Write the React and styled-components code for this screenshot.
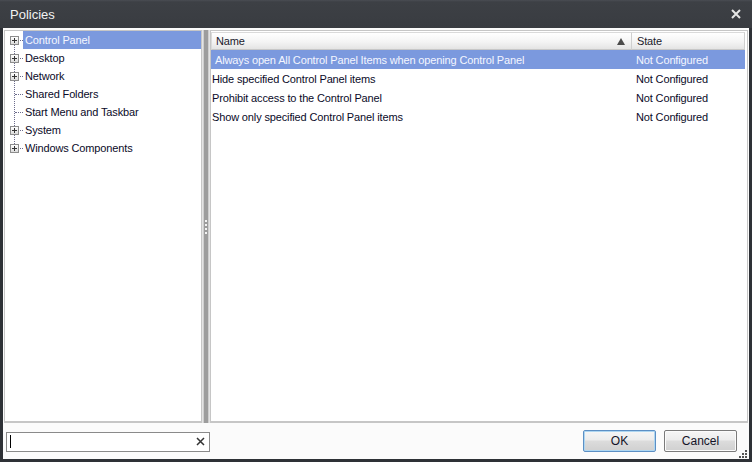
import styled, { createGlobalStyle } from "styled-components";

const Global = createGlobalStyle`
    html, body {
        margin: 0;
        padding: 0;
        background: #2d3035;
    }
    * {
        box-sizing: border-box;
    }
`;

const Window = styled.div`
    width: 752px;
    height: 462px;
    display: flex;
    flex-direction: column;
    background: #2e3136;
    padding: 0 3px 3px 3px;
    font-family: "Liberation Sans", Arial, sans-serif;
    font-size: 11px;
    letter-spacing: -0.14px;
    color: #0a0a28;
`;

const TitleBar = styled.div`
    height: 28px;
    flex: none;
    display: flex;
    align-items: center;
    justify-content: space-between;
    margin: 0 -3px;
    padding: 0 8px 0 10px;
    background: linear-gradient(#4a4d53 0px, #3d4045 2px, #393c41 100%);
    color: #f2f2f2;
    font-size: 13px;
    letter-spacing: 0;
`;

const CloseIcon = styled.svg`
    width: 10px;
    height: 10px;
    margin-right: 3px;
`;

const Body = styled.div`
    flex: 1;
    display: flex;
    flex-direction: column;
    background: #fbfbfb;
    padding: 2px 1px 0 1px;
`;

const Panes = styled.div`
    flex: 1;
    display: flex;
    min-height: 0;
`;

const TreePane = styled.div`
    width: 198px;
    flex: none;
    background: #fff;
    border: 1px solid #c6c6c6;
    border-bottom-width: 2px;
`;

const Splitter = styled.div`
    width: 8px;
    flex: none;
    display: flex;
    align-items: center;
    justify-content: center;
    background: #cfcfcf;
    border-left: 1px solid #e4e4e4;
    border-right: 1px solid #e4e4e4;
`;

const SplitBar = styled.div`
    width: 4px;
    height: 100%;
    background: #9d9d9d;
    display: flex;
    flex-direction: column;
    align-items: center;
    justify-content: center;
    gap: 2px;
`;

const Grip = styled.span`
    width: 2px;
    height: 2px;
    background: #f4f4f4;
`;

const TreeList = styled.ul`
    list-style: none;
    margin: 0;
    padding: 0;
    position: relative;

    &::before {
        content: "";
        position: absolute;
        left: 9px;
        top: 8px;
        height: 109px;
        border-left: 1px dotted #6c6c8c;
    }
`;

const TreeRow = styled.li`
    height: 18px;
    display: flex;
    align-items: center;
`;

const Expander = styled.span`
    width: 18px;
    flex: none;
    display: flex;
    align-items: center;
    padding-left: 5px;
    position: relative;
    height: 100%;

    &::after {
        content: "";
        position: absolute;
        left: 10px;
        right: 0;
        top: 9px;
        border-top: 1px dotted #6c6c8c;
    }
`;

const PlusBox = styled.span`
    width: 9px;
    height: 9px;
    border: 1px solid #8d8d8d;
    background: linear-gradient(#ffffff, #dcdcdc);
    position: relative;
    z-index: 1;
    display: block;

    &::before {
        content: "";
        position: absolute;
        left: 1px;
        top: 3px;
        width: 5px;
        height: 1px;
        background: #333;
    }
    &::after {
        content: "";
        position: absolute;
        left: 3px;
        top: 1px;
        width: 1px;
        height: 5px;
        background: #333;
    }
`;

const TreeLabel = styled.span`
    flex: 1;
    height: 100%;
    display: flex;
    align-items: center;
    padding-left: 2px;
    background: ${p => (p.$selected ? "#7b99de" : "transparent")};
    color: ${p => (p.$selected ? "#f4f6ff" : "#0a0a28")};
`;

const ListPane = styled.div`
    flex: 1;
    background: #fff;
    border: 1px solid #c6c6c6;
    border-bottom-width: 2px;
    padding: 1px 2px 0 0;
    display: flex;
    flex-direction: column;
`;

const Grid = styled.div`
    display: grid;
    grid-template-columns: 1fr 113px;
`;

const HeaderCell = styled.div`
    height: 18px;
    display: flex;
    align-items: center;
    justify-content: space-between;
    padding: 0 6px 0 ${p => (p.$first ? "4px" : "5px")};
    background: linear-gradient(#ffffff 0%, #f4f4f4 55%, #e4e4e4 100%);
    border-bottom: 1px solid #c7c7c7;
    border-top: 1px solid #dadada;
    border-left: ${p => (p.$first ? "1px solid #dadada" : "none")};
    border-right: 1px solid #cfcfcf;
    color: #1a1a2c;
`;

const SortArrow = styled.span`
    width: 0;
    height: 0;
    border-left: 4px solid transparent;
    border-right: 4px solid transparent;
    border-bottom: 7px solid #4b4b4b;
`;

const Cell = styled.div`
    height: 19px;
    display: flex;
    align-items: center;
    padding-left: ${p => (p.$state ? "4px" : p.$selected ? "4px" : "1px")};
    white-space: nowrap;
    background: ${p => (p.$selected ? "#7b99de" : "transparent")};
    color: ${p => (p.$selected ? "#f4f6ff" : "#0a0a28")};
`;

const Footer = styled.div`
    height: 36px;
    flex: none;
    display: flex;
    align-items: center;
    justify-content: space-between;
    padding: 1px 11px 0 2px;
    position: relative;
`;

const Search = styled.div`
    width: 204px;
    height: 20px;
    border: 1px solid #8a8a8a;
    background: #fff;
    display: flex;
    align-items: center;
    justify-content: space-between;
    padding: 0 4px 0 3px;
`;

const Caret = styled.span`
    width: 1px;
    height: 13px;
    background: #000;
`;

const ClearIcon = styled.svg`
    width: 9px;
    height: 9px;
`;

const Buttons = styled.div`
    display: flex;
    gap: 8px;
    margin-top: -2px;
`;

const Button = styled.button`
    width: 73px;
    height: 22px;
    font-family: inherit;
    font-size: 12px;
    color: #141428;
    border-radius: 2px;
    border: 1px solid ${p => (p.$default ? "#5c8fc4" : "#7a7a7a")};
    background: linear-gradient(#f6f6f6 0%, #ececec 45%, #dcdcdc 50%, #d0d0d0 100%);
    box-shadow: inset 0 0 0 1px ${p => (p.$default ? "#aed6f1" : "#fbfbfb")};
    padding: 0;
`;

const ResizeGrip = styled.svg`
    position: absolute;
    right: 0;
    bottom: 0;
    width: 10px;
    height: 10px;
`;

const treeItems = [
    { name: "Control Panel", expandable: true, selected: true },
    { name: "Desktop", expandable: true },
    { name: "Network", expandable: true },
    { name: "Shared Folders" },
    { name: "Start Menu and Taskbar" },
    { name: "System", expandable: true },
    { name: "Windows Components", expandable: true },
];

const policies = [
    "Always open All Control Panel Items when opening Control Panel",
    "Hide specified Control Panel items",
    "Prohibit access to the Control Panel",
    "Show only specified Control Panel items",
];

const App = () => {
    return (
        <>
            <Global />
            <Window>
                <TitleBar>
                    <span>Policies</span>
                    <CloseIcon viewBox="0 0 10 10">
                        <path d="M1 1 L9 9 M9 1 L1 9" stroke="#e6e6e6" strokeWidth="2" />
                    </CloseIcon>
                </TitleBar>
                <Body>
                    <Panes>
                        <TreePane>
                            <TreeList>
                                {treeItems.map(item => (
                                    <TreeRow key={item.name}>
                                        <Expander>
                                            {item.expandable && <PlusBox />}
                                        </Expander>
                                        <TreeLabel $selected={item.selected}>{item.name}</TreeLabel>
                                    </TreeRow>
                                ))}
                            </TreeList>
                        </TreePane>
                        <Splitter>
                            <SplitBar>
                                <Grip /><Grip /><Grip /><Grip />
                            </SplitBar>
                        </Splitter>
                        <ListPane>
                            <Grid>
                                <HeaderCell $first>
                                    Name
                                    <SortArrow />
                                </HeaderCell>
                                <HeaderCell>State</HeaderCell>
                                {policies.map((p, i) => [
                                    <Cell key={p} $selected={i === 0}>{p}</Cell>,
                                    <Cell key={p + "-s"} $state $selected={i === 0}>Not Configured</Cell>,
                                ])}
                            </Grid>
                        </ListPane>
                    </Panes>
                    <Footer>
                        <Search>
                            <Caret />
                            <ClearIcon viewBox="0 0 9 9">
                                <path d="M1 1 L8 8 M8 1 L1 8" stroke="#333" strokeWidth="1.5" />
                            </ClearIcon>
                        </Search>
                        <Buttons>
                            <Button $default>OK</Button>
                            <Button>Cancel</Button>
                        </Buttons>
                        <ResizeGrip viewBox="0 0 10 10">
                            <g fill="#555">
                                <rect x="7" y="1" width="2" height="2" />
                                <rect x="4" y="4" width="2" height="2" />
                                <rect x="7" y="4" width="2" height="2" />
                                <rect x="1" y="7" width="2" height="2" />
                                <rect x="4" y="7" width="2" height="2" />
                                <rect x="7" y="7" width="2" height="2" />
                            </g>
                        </ResizeGrip>
                    </Footer>
                </Body>
            </Window>
        </>
    );
};

export default App;
